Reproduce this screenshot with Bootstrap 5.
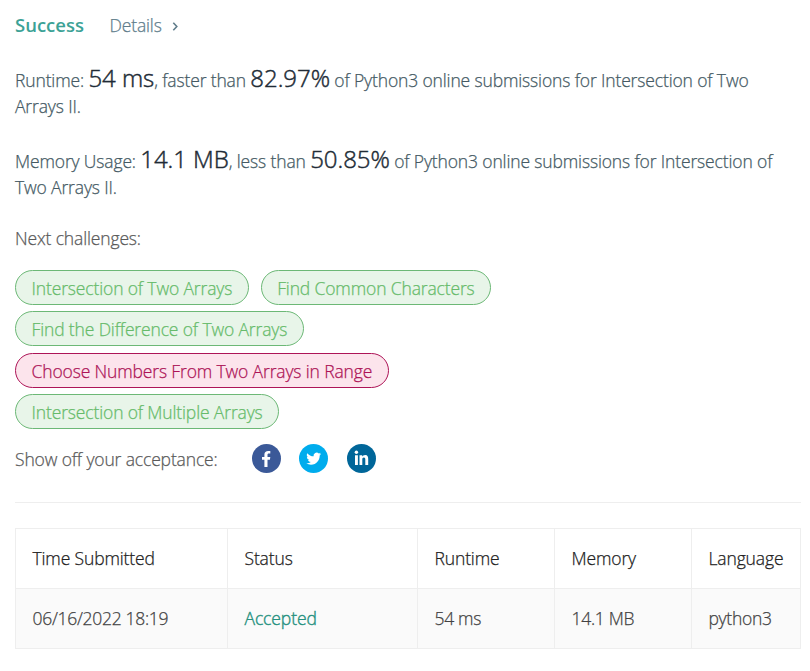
<!DOCTYPE html>
<html lang="en">
<head>
<meta charset="utf-8">
<meta name="viewport" content="width=device-width, initial-scale=1">
<title>Submission Result</title>
<link href="https://cdn.jsdelivr.net/npm/bootstrap@5.3.0/dist/css/bootstrap.min.css" rel="stylesheet">
<style>
body { font-family: "Open Sans", "Noto Sans", sans-serif; font-size: 17.5px; font-weight: 300; line-height: 26px; letter-spacing: -.14px; -webkit-text-stroke: .25px; color: #455a64; background: #fff; }
.result-page { padding: 12px 9px 0 15px; }
.result-head { height: 26px; margin-bottom: 29px; }
.state { color: #3ca296; font-weight: 600; font-size: 18.5px; width: 94.5px; letter-spacing: 0; -webkit-text-stroke: 0; }
.details { color: #607d8b; width: 52px; }
.result-line { height: 52px; margin-bottom: 29px; white-space: nowrap; }
.result-line .figure-num { color: #212b36; font-size: 24px; line-height: 20px; letter-spacing: -.05px; -webkit-text-stroke: .45px; }
.grey { color: #5a5a5a; }
.challenges { margin-top: -4px; }
.tags { gap: 6.4px 12px; margin-top: 19px; }
.tag { height: 35px; border: 1px solid #6cb876; color: #66bb6a; background: #e8f5e9; padding: 4px 15.5px 0; line-height: 26px; white-space: nowrap; }
.tag-hard { color: #ad1457; border-color: #ad1457; background: #fce4ec; }
.share { height: 30px; margin-top: 14.8px; }
.share-label { width: 237px; }
.share svg { margin-right: 18.4px; display: block; }
.rule { height: 1px; background: #eee; margin: 28px 0 25px; }
.result-table { table-layout: fixed; width: 786px; margin: 0; border-collapse: collapse; }
.result-table > :not(caption) > * > * { height: 60px; padding: 0 16px 0 16.5px; font-weight: 300; border: 1px solid #eee; color: #212121; background: transparent; vertical-align: middle; white-space: nowrap; }
.result-table > tbody > tr > td { background: #fafafa; color: #424242; letter-spacing: -.3px; }
.result-table > tbody > tr > td.accepted { color: #26917f; letter-spacing: -.1px; -webkit-text-stroke: .4px; }
</style>
<script src="https://cdn.jsdelivr.net/npm/bootstrap@5.3.0/dist/js/bootstrap.bundle.min.js"></script>
</head>
<body>
<main class="result-page">
  <div class="result-head d-flex align-items-center">
    <span class="state">Success</span>
    <span class="details">Details</span>
    <svg class="ms-2" width="14" height="14" viewBox="0 0 14 14" fill="none" stroke="#607d8b" stroke-width="1.6"><path d="M3.3 4.8 6.8 8.5 3.3 12.2"/></svg>
  </div>
  <div class="result-line">Runtime: <span class="figure-num">54 ms</span>, faster than <span class="figure-num">82.97%</span> of Python3 online submissions for Intersection of Two<br>Arrays II.</div>
  <div class="result-line">Memory Usage: <span class="figure-num">14.1 MB</span>, less than <span class="figure-num">50.85%</span> of Python3 online submissions for Intersection of<br>Two Arrays II.</div>
  <div class="challenges grey">Next challenges:</div>
  <div class="tags d-flex flex-column">
    <div class="d-flex tags m-0"><span class="tag rounded-pill">Intersection of Two Arrays</span><span class="tag rounded-pill">Find Common Characters</span></div>
    <div class="d-flex"><span class="tag rounded-pill">Find the Difference of Two Arrays</span></div>
    <div class="d-flex"><span class="tag tag-hard rounded-pill">Choose Numbers From Two Arrays in Range</span></div>
    <div class="d-flex"><span class="tag rounded-pill">Intersection of Multiple Arrays</span></div>
  </div>
  <div class="share d-flex align-items-center">
    <span class="share-label grey">Show off your acceptance:</span>
    <svg width="29" height="29" viewBox="0 0 29 29"><circle cx="14.5" cy="14.5" r="14.5" fill="#3b5998"/><path fill="#fff" d="M12.4 23v-7.2H10v-2.9h2.4v-2.2c0-2.6 1.5-3.8 3.8-3.8l2.1.1v2.6h-1.4c-1.1 0-1.4.6-1.4 1.4v1.9h2.8l-.4 2.9h-2.4V23z"/></svg>
    <svg width="29" height="29" viewBox="0 0 29 29"><circle cx="14.5" cy="14.5" r="14.5" fill="#00aced"/><path fill="#fff" transform="translate(7.3 7.2) scale(.62)" d="M23.95 4.57a10 10 0 0 1-2.82.77 4.96 4.96 0 0 0 2.16-2.72c-.95.55-2 .95-3.12 1.18a4.92 4.92 0 0 0-8.38 4.48C7.69 8.09 4.07 6.13 1.64 3.16a4.92 4.92 0 0 0 1.52 6.57 4.9 4.9 0 0 1-2.23-.61v.06a4.92 4.92 0 0 0 3.95 4.83 5 5 0 0 1-2.21.08 4.94 4.94 0 0 0 4.6 3.42A9.87 9.87 0 0 1 0 19.54a14 14 0 0 0 7.55 2.21c9.05 0 14-7.5 14-13.98l-.02-.64a9.94 9.94 0 0 0 2.42-2.56z"/></svg>
    <svg width="29" height="29" viewBox="0 0 29 29"><circle cx="14.5" cy="14.5" r="14.5" fill="#006699"/><g fill="#fff"><circle cx="9.4" cy="8.3" r="1.7"/><path d="M8 11.2h2.9V21H8zM12.5 11.2h2.7v1.4c.5-.9 1.6-1.7 3-1.7 2.5 0 3 1.8 3 4.1v6h-2.9v-5.4c0-1.2-.2-2.2-1.4-2.2s-1.6.9-1.6 2.1V21h-2.8z"/></g></svg>
  </div>
  <div class="rule"></div>
  <table class="table result-table">
    <colgroup><col style="width:212px"><col style="width:190px"><col style="width:137px"><col style="width:137px"><col style="width:109px"></colgroup>
    <thead><tr><th>Time Submitted</th><th>Status</th><th>Runtime</th><th>Memory</th><th>Language</th></tr></thead>
    <tbody><tr><td>06/16/2022 18:19</td><td class="accepted">Accepted</td><td>54 ms</td><td>14.1 MB</td><td>python3</td></tr></tbody>
  </table>
</main>
</body>
</html>
